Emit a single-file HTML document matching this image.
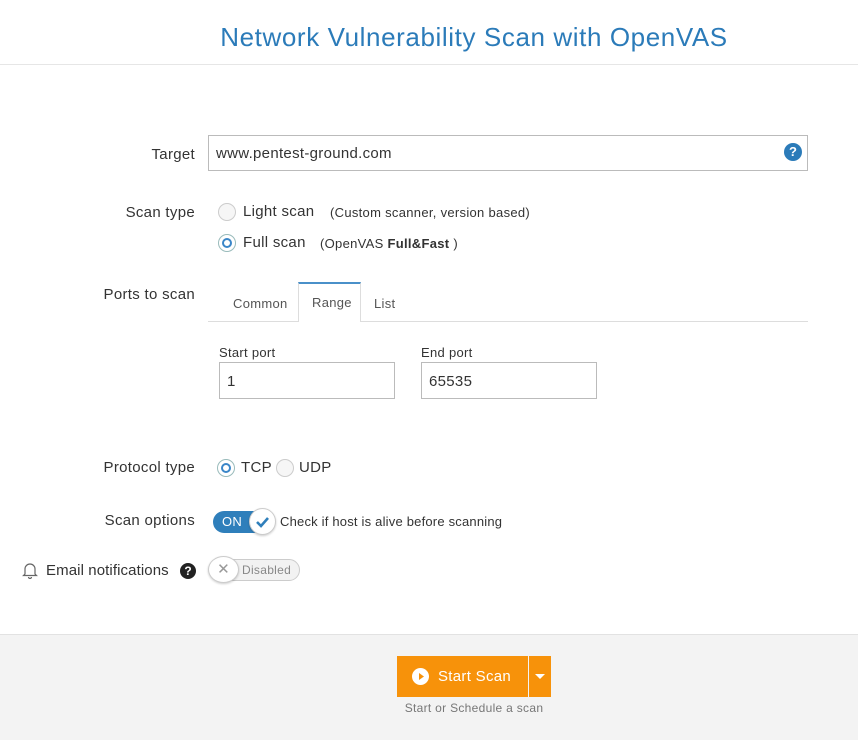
<!DOCTYPE html>
<html><head><meta charset="utf-8"><style>
*{box-sizing:border-box;margin:0;padding:0}
body{width:858px;height:750px;background:#fff;font-family:"Liberation Sans","DejaVu Sans",sans-serif;color:#333;position:relative;overflow:hidden;letter-spacing:0.3px}
.a{position:absolute}
.lbl{position:absolute;right:663px;font-size:15px;color:#333;white-space:nowrap}
.radio{position:absolute;width:18px;height:18px;border:1px solid #ccc;border-radius:50%;background:#f6f6f6}
.radio.on{border-color:#9bb;background:#fff}
.radio.on::after{content:"";position:absolute;left:3px;top:3px;width:10px;height:10px;border:2px solid #3a86c8;border-radius:50%;box-sizing:border-box}
.inp{position:absolute;border:1px solid #bbb;background:#fff;font-size:15px;padding-left:7px}
</style></head><body>
<div class="a" style="left:0;top:0;width:858px;height:65px;border-bottom:1px solid #e6e6e6"></div>
<div class="a" style="left:0;width:948px;top:22px;text-align:center;font-size:26px;color:#2b7bb9;letter-spacing:0.6px">Network Vulnerability Scan with OpenVAS</div>

<div class="lbl" style="top:146px">Target</div>
<div class="inp" style="left:208px;top:135px;width:600px;height:36px;line-height:35px">www.pentest-ground.com</div>
<div class="a" style="left:784px;top:143px;width:18px;height:18px;border-radius:50%;background:#2b7bb9;color:#fff;font-size:13px;font-weight:bold;text-align:center;line-height:18px;letter-spacing:0">?</div>

<div class="lbl" style="top:204px">Scan type</div>
<div class="radio" style="left:218px;top:203px"></div>
<div class="a" style="left:243px;top:203px;font-size:15px">Light scan</div>
<div class="a" style="left:330px;top:205px;font-size:13px">(Custom scanner, version based)</div>
<div class="radio on" style="left:218px;top:234px"></div>
<div class="a" style="left:243px;top:234px;font-size:15px">Full scan</div>
<div class="a" style="left:320px;top:236px;font-size:13px">(OpenVAS <b style="font-weight:600">Full&amp;Fast</b> )</div>

<div class="lbl" style="top:286px">Ports to scan</div>
<div class="a" style="left:208px;top:321px;width:600px;height:1px;background:#ddd"></div>
<div class="a" style="left:298px;top:282px;width:63px;height:40px;border:1px solid #ddd;border-top:2px solid #4a90c9;border-bottom:none;background:#fff"></div>
<div class="a" style="left:233px;top:296px;font-size:13px;color:#555">Common</div>
<div class="a" style="left:312px;top:295px;font-size:13px;color:#555">Range</div>
<div class="a" style="left:374px;top:296px;font-size:13px;color:#555">List</div>
<div class="a" style="left:219px;top:345px;font-size:13px">Start port</div>
<div class="a" style="left:421px;top:345px;font-size:13px">End port</div>
<div class="inp" style="left:219px;top:362px;width:176px;height:37px;line-height:37px">1</div>
<div class="inp" style="left:421px;top:362px;width:176px;height:37px;line-height:37px">65535</div>

<div class="lbl" style="top:459px">Protocol type</div>
<div class="radio on" style="left:217px;top:459px"></div>
<div class="a" style="left:241px;top:459px;font-size:15px">TCP</div>
<div class="radio" style="left:276px;top:459px"></div>
<div class="a" style="left:299px;top:459px;font-size:15px">UDP</div>

<div class="lbl" style="top:512px">Scan options</div>
<div class="a" style="left:213px;top:511px;width:60px;height:22px;border-radius:11px;background:#2f7fbb;color:#fff;font-size:13px;line-height:22px;padding-left:9px">ON</div>
<div class="a" style="left:249px;top:508px;width:27px;height:27px;border-radius:50%;background:#fff;border:1px solid #ccc;box-shadow:0 1px 2px rgba(0,0,0,.2)">
<svg width="25" height="25" viewBox="0 0 25 25"><path d="M7 13l4 4 7-8" fill="none" stroke="#2f7fbb" stroke-width="2.6"/></svg></div>
<div class="a" style="left:280px;top:514px;font-size:13px;letter-spacing:0.2px">Check if host is alive before scanning</div>

<svg class="a" style="left:22px;top:561px" width="16" height="18" viewBox="0 0 16 18"><path d="M3 13V8a5 5 0 0110 0v5l1.5 1.5h-13z M6.5 16a1.5 1.5 0 003 0" fill="none" stroke="#666" stroke-width="1.2"/></svg>
<div class="a" style="left:46px;top:562px;font-size:15px;letter-spacing:0.1px">Email notifications</div>
<div class="a" style="left:180px;top:563px;width:16px;height:16px;border-radius:50%;background:#222;color:#fff;font-size:12px;font-weight:bold;text-align:center;line-height:16px;letter-spacing:0">?</div>
<div class="a" style="left:209px;top:559px;width:91px;height:22px;border-radius:11px;background:#f2f2f2;border:1px solid #ccc;color:#888;font-size:12px;line-height:20px;padding-left:32px">Disabled</div>
<div class="a" style="left:208px;top:556px;width:31px;height:27px;border-radius:50%;background:#fff;border:1px solid #ccc;box-shadow:0 1px 2px rgba(0,0,0,.2);text-align:center;color:#999;font-size:15px;line-height:25px;font-weight:bold">✕</div>

<div class="a" style="left:0;top:634px;width:858px;height:106px;background:#f3f3f3;border-top:1px solid #e2e2e2"></div>
<div class="a" style="left:397px;top:656px;width:131px;height:41px;background:#f7920a"></div>
<div class="a" style="left:529px;top:656px;width:22px;height:41px;background:#f7920a"></div>
<div class="a" style="left:412px;top:668px;width:17px;height:17px;border-radius:50%;background:#fff"></div>
<svg class="a" style="left:412px;top:668px" width="17" height="17"><path d="M7 5l5 3.5-5 3.5z" fill="#f7920a"/></svg>
<div class="a" style="left:438px;top:668px;font-size:15px;color:#fff">Start Scan</div>
<svg class="a" style="left:535px;top:674px" width="10" height="6"><path d="M0 0h10L5 5z" fill="#fff"/></svg>
<div class="a" style="left:0;width:948px;top:701px;text-align:center;font-size:12px;color:#777">Start or Schedule a scan</div>
</body></html>
